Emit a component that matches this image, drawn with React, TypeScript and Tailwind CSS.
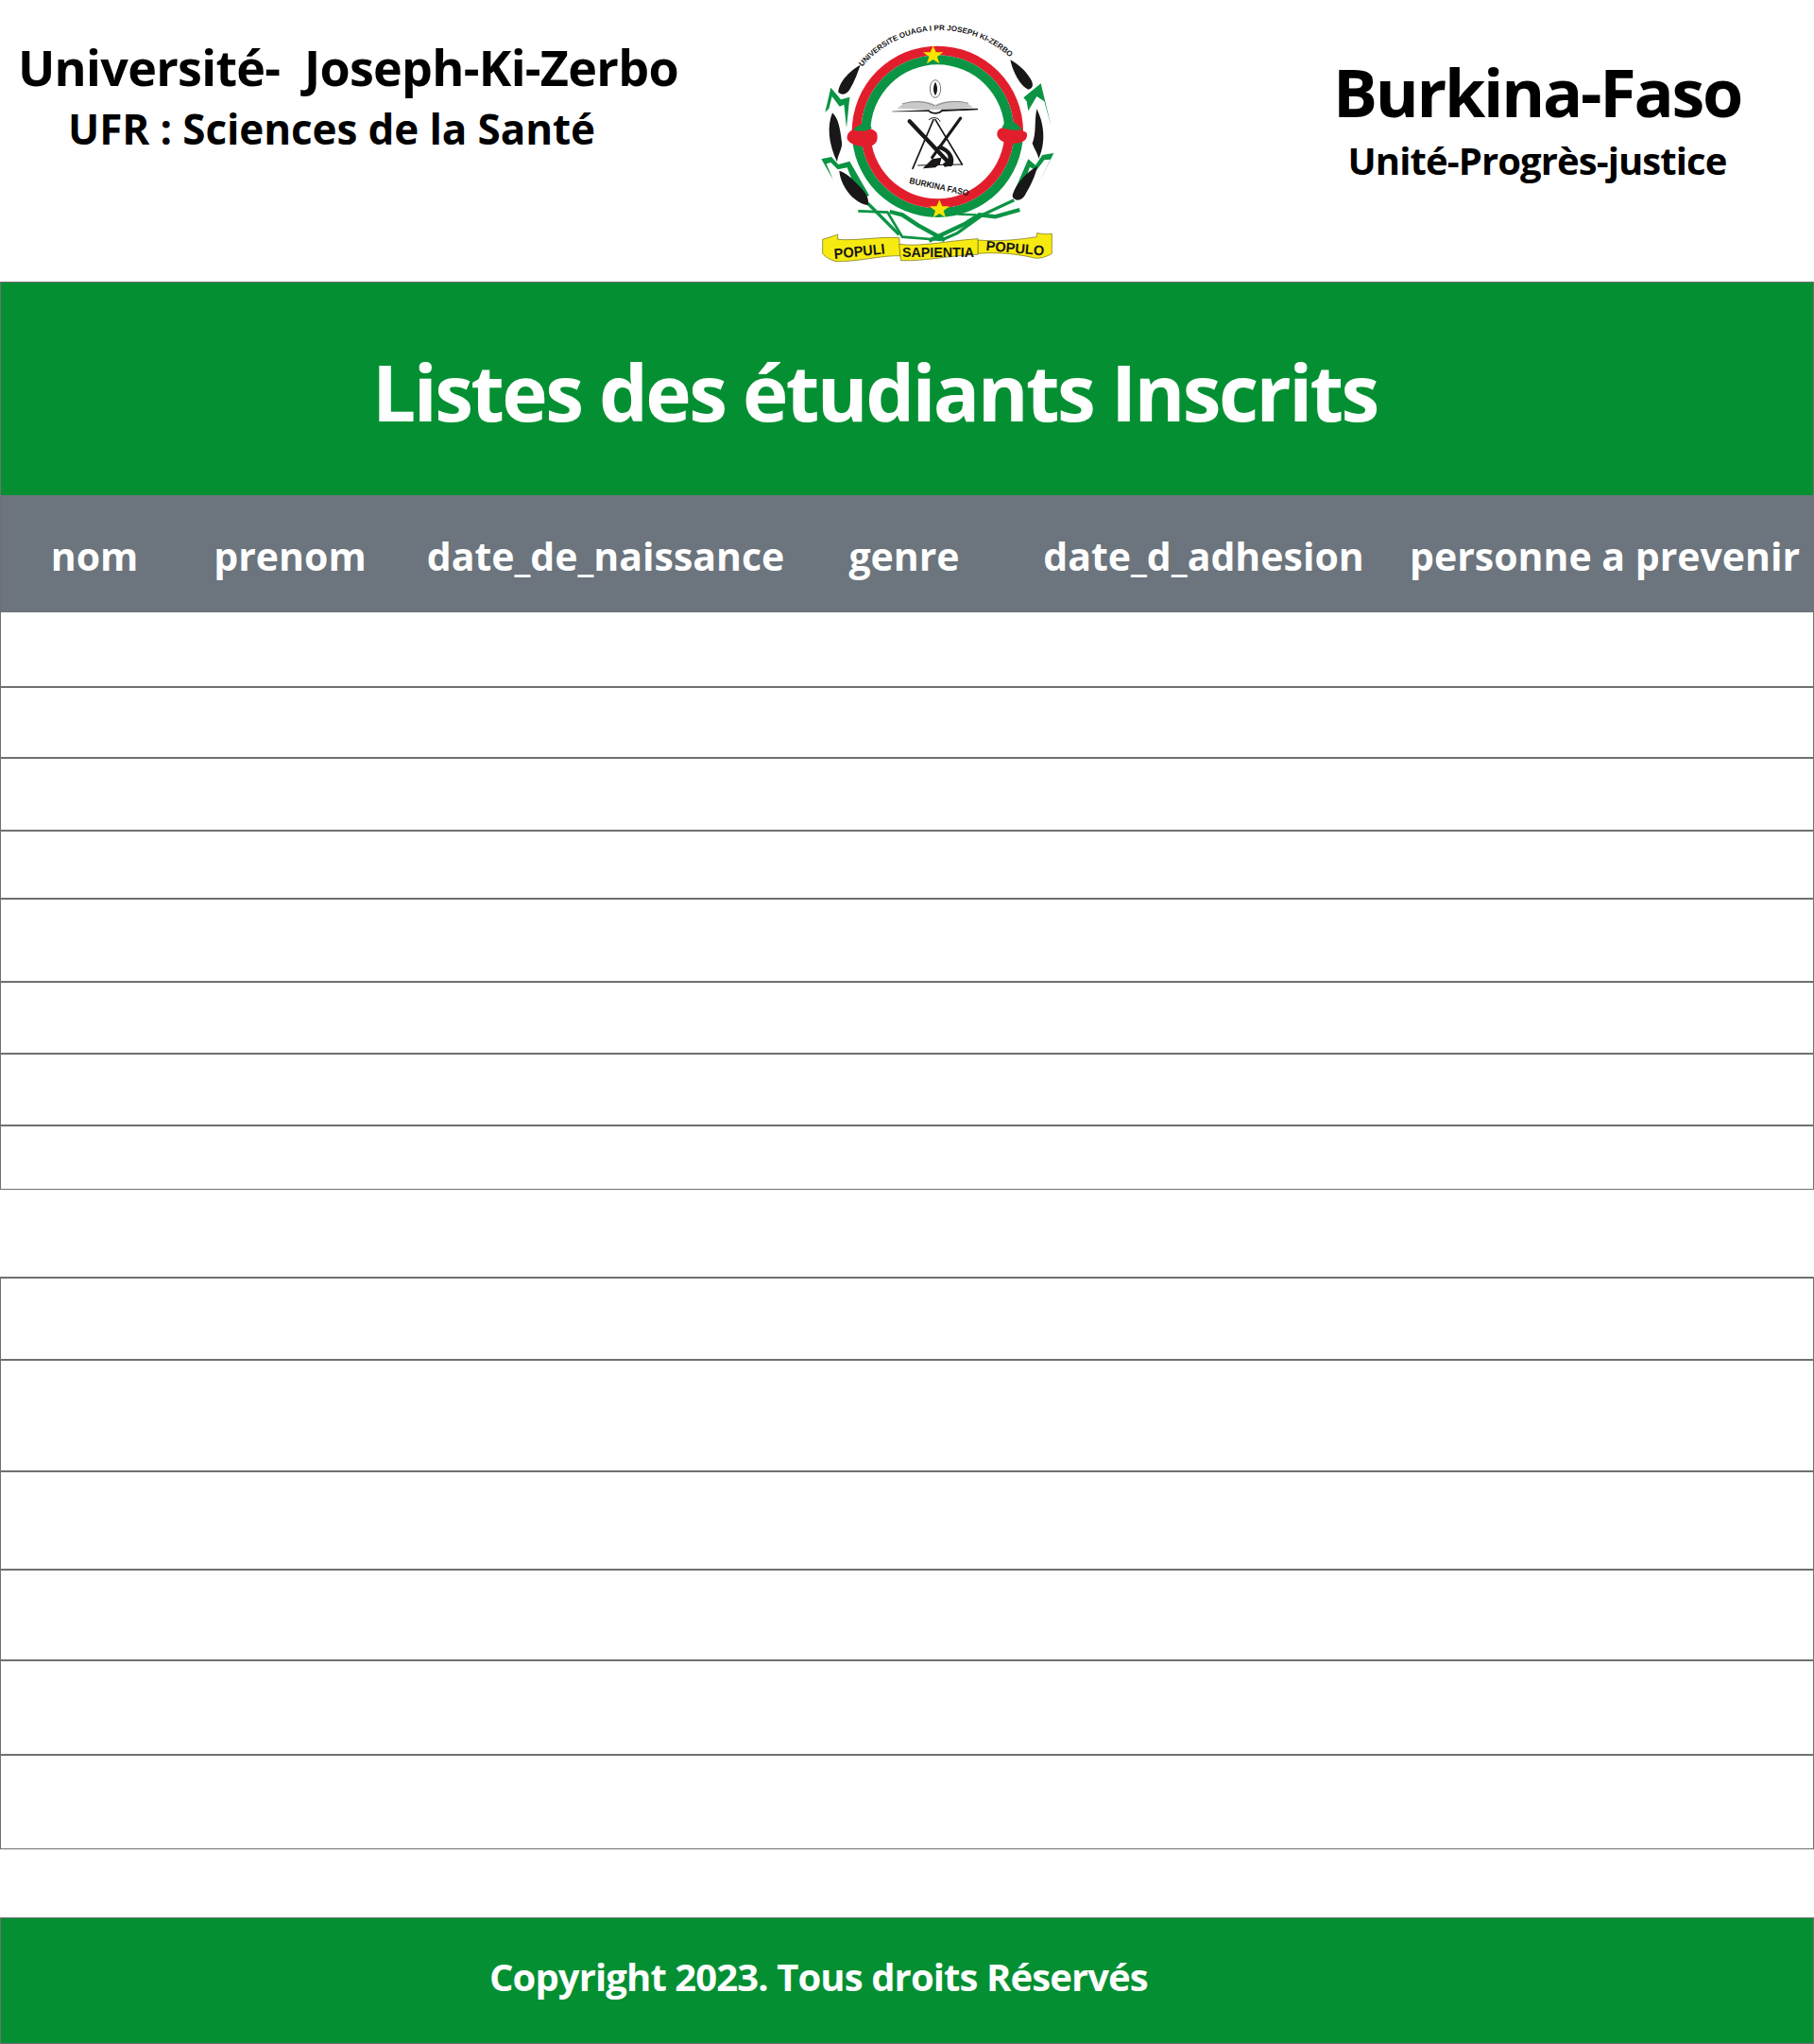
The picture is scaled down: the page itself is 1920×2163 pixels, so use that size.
const firstRows = [80, 75, 77, 72, 88, 76, 76];
const secondRows = [87, 118, 104, 96, 100];

const columns = [
  { label: "nom", className: "w-[198px]" },
  { label: "prenom", className: "w-[216px]" },
  { label: "date_de_naissance", className: "w-[452px]" },
  { label: "genre", className: "w-[180px]" },
  { label: "date_d_adhesion", className: "w-[454px]" },
  { label: "personne a prevenir", className: "w-[413px] -ml-[9px]" },
];

function Logo() {
  return (
    <svg viewBox="0 0 900 810" className="w-[300px] h-[270px] shrink-0">
      <defs>
        <path id="arcTop" d="M 218 152 A 325 325 0 0 1 700 135" fill="none" />
      </defs>
      {/* laurel, green outlines */}
      <g fill="#0a9444">
        <path d="M100 296 L118 218 L150 256 L178 248 L168 346 L160 272 L146 278 L122 246 L112 285 Z" />
        <path d="M88 445 L120 438 L142 462 L178 452 L240 560 L210 575 L170 472 L140 478 L118 456 L104 460 L125 510 Z" />
        <path d="M730 250 L785 205 L818 342 L796 262 L772 246 L745 292 L740 262 Z" />
        <path d="M826 426 L790 432 L768 464 L745 445 L695 560 L720 555 L750 470 L770 482 L796 448 L815 446 L780 520 Z" />
      </g>
      <g fill="none" stroke="#0a9444" strokeLinejoin="miter">
        <path d="M205 610 L298 614 L345 692 L470 702" strokeWidth="8" />
        <path d="M235 585 L335 685" strokeWidth="10" />
        <path d="M305 612 L345 622 L395 655 L480 702" strokeWidth="13" />
        <path d="M718 606 L640 628 L590 622 L545 650 L430 704" strokeWidth="13" />
        <path d="M700 575 L600 622 L520 680 L470 702" strokeWidth="10" />
        <path d="M520 620 L580 622" strokeWidth="7" />
      </g>
      {/* feathers */}
      <g fill="#1a1718">
        <path d="M212 146 C175 165 142 205 142 232 C150 245 168 240 178 224 C192 200 202 175 212 146 Z" />
        <path d="M123 298 C106 340 110 395 138 454 C142 425 158 410 152 385 C148 350 142 315 123 298 Z" />
        <path d="M145 482 C148 525 185 582 236 592 C242 570 228 550 208 530 C188 510 168 488 145 482 Z" />
        <path d="M688 130 C695 165 720 215 745 224 C762 222 762 205 752 190 C737 165 712 142 688 130 Z" />
        <path d="M772 286 C763 330 772 360 758 395 C765 415 775 425 778 444 C794 410 804 350 772 286 Z" />
        <path d="M774 468 C735 488 698 535 695 565 C705 582 727 577 737 555 C752 530 767 500 774 468 Z" />
      </g>
      {/* ring */}
      <path d="M185 358 A272 272 0 0 1 729 358 L700 358 A243 243 0 0 0 214 358 Z" fill="#e21e2d" />
      <path d="M214 358 A243 243 0 0 1 700 358 L670 358 A213 213 0 0 0 244 358 Z" fill="#0a9444" />
      <path d="M185 358 A272 272 0 0 0 729 358 L700 358 A243 243 0 0 1 214 358 Z" fill="#0a9444" />
      <path d="M214 358 A243 243 0 0 0 700 358 L670 358 A213 213 0 0 1 244 358 Z" fill="#e21e2d" />
      {/* knots */}
      <path d="M188 352 C225 345 250 345 264 362 C270 385 262 400 240 405 C210 408 180 400 170 382 C168 368 175 358 188 352 Z" fill="#e21e2d" />
      <path d="M190 352 C205 335 230 325 248 345 C245 352 215 362 190 352 Z" fill="#0a9444" />
      <path d="M665 345 C700 352 730 352 740 362 C745 378 735 392 705 395 C675 396 650 388 646 368 C646 355 652 348 665 345 Z" fill="#e21e2d" />
      <path d="M662 345 C670 318 700 315 725 352 C700 355 680 352 662 345 Z" fill="#0a9444" />
      {/* stars */}
      <polygon points="443,85 452,106 475,106 456,120 463,142 443,129 423,142 430,120 411,106 434,106" fill="#f5e500" />
      <polygon points="463,574 472,595 495,595 476,609 483,631 463,618 443,631 450,609 431,595 454,595" fill="#f5e500" />
      {/* flame */}
      <ellipse cx="450" cy="222" rx="17" ry="28" fill="#ffffff" stroke="#333333" strokeWidth="2" />
      <path d="M450 200 C458 215 458 230 450 243 C442 230 442 215 450 200 Z" fill="#1a1718" />
      {/* open book */}
      <path d="M330 285 C350 258 410 252 450 272 C490 252 550 258 570 283 L470 288 L430 288 Z" fill="#c9c9c9" />
      <path d="M345 270 C380 258 420 262 448 276 M555 268 C520 258 480 262 452 276" fill="none" stroke="#8a8a8a" strokeWidth="3" />
      <path d="M313 293 L430 289 C438 300 462 300 470 288 L585 284 L585 289 L472 294 C462 305 438 305 428 294 L313 295 Z" fill="#1a1718" />
      {/* compass and tools */}
      <g stroke="#1a1718" fill="none" strokeLinecap="round">
        <path d="M368 325 L498 462" strokeWidth="13" />
        <path d="M530 315 L440 440" strokeWidth="9" />
        <path d="M444 320 L378 475" strokeWidth="5" />
        <path d="M450 320 L535 462" strokeWidth="5" />
        <path d="M395 465 L535 462" strokeWidth="3" />
        <path d="M430 320 C440 310 460 312 465 325" strokeWidth="3" />
      </g>
      <path d="M410 475 L440 445 L470 440 L465 460 L450 472 Z" fill="#1a1718" />
      <path d="M450 410 C470 415 495 425 490 445 C485 460 465 455 480 470 L505 465 C515 440 500 415 465 400 Z" fill="#1a1718" />
      {/* ribbon */}
      <g fill="#f7ea10" stroke="#6b6a10" strokeWidth="2">
        <path d="M92 700 C110 695 125 690 140 684 L140 700 C200 705 280 690 335 695 L340 752 C280 750 200 772 135 770 C115 765 100 755 92 745 Z" />
        <path d="M585 702 C650 708 720 700 772 692 L772 680 C790 682 805 685 820 682 L820 745 C805 755 785 760 770 760 C710 745 640 740 585 745 Z" />
        <path d="M335 715 C400 725 480 705 585 698 L585 748 C500 750 420 770 340 767 Z" />
      </g>
      <g fill="#161616" fontFamily="'Liberation Sans', sans-serif">
        <text x="130" y="762" fontSize="46" transform="rotate(-6 130 762)" textLength="162" lengthAdjust="spacingAndGlyphs">POPULI</text>
        <text x="345" y="756" fontSize="44" textLength="228" lengthAdjust="spacingAndGlyphs">SAPIENTIA</text>
        <text x="610" y="735" fontSize="44" transform="rotate(5 610 735)" textLength="185" lengthAdjust="spacingAndGlyphs">POPULO</text>
        <text fontSize="24">
          <textPath href="#arcTop" textLength="525" lengthAdjust="spacingAndGlyphs">UNIVERSITE OUAGA I PR JOSEPH KI-ZERBO</textPath>
        </text>
        <text x="366" y="522" fontSize="27" transform="rotate(12 366 522)" textLength="192" lengthAdjust="spacingAndGlyphs">BURKINA FASO</text>
      </g>
    </svg>
  );
}

export default function App() {
  return (
    <div className="w-[1920px] min-h-[2163px] bg-white font-['Open_Sans','Noto_Sans',sans-serif] font-bold text-black">
      <header className="h-[298px] flex">
        <div className="w-[840px] pt-[38px]">
          <h1 className="ml-[19px] text-[52px] leading-[66px] tracking-[-0.7px] whitespace-pre">Université-  Joseph-Ki-Zerbo</h1>
          <h2 className="ml-[72px] mt-[2px] text-[44px] leading-[60px] tracking-[-0.1px]">UFR : Sciences de la Santé</h2>
        </div>
        <div className="pt-[20px]">
          <Logo />
        </div>
        <div className="flex-1 pt-[49px] pl-[194px] text-center">
          <p className="text-[70px] leading-[96px] tracking-[-2.25px]">Burkina-Faso</p>
          <p className="-mt-[2px] text-[40px] leading-[54px] tracking-[-0.9px]">Unité-Progrès-justice</p>
        </div>
      </header>

      <div className="h-[226px] pt-[5px] border border-b-0 border-[#707070] bg-[#049032] text-white flex items-center pl-[393px]">
        <h1 className="text-[82px] leading-none tracking-[-2.6px]">Listes des étudiants Inscrits</h1>
      </div>

      <div className="h-[124px] pt-[5px] flex items-center bg-[#6c757d] border-l border-r border-[#707070] text-white">
        {columns.map((col) => (
          <div key={col.label} className={`${col.className} text-center text-[41px] whitespace-nowrap`}>
            {col.label}
          </div>
        ))}
      </div>

      <div className="border-l border-r border-[#707070]">
        {firstRows.map((h, i) => (
          <div key={i} className="border-b-2 border-[#707070]" style={{ height: h }} />
        ))}
        <div className="h-[67px] border-b border-[#707070]" />
      </div>

      <div className="mt-[92px] border-l border-r border-t-2 border-[#707070]">
        {secondRows.map((h, i) => (
          <div key={i} className="border-b-2 border-[#707070]" style={{ height: h }} />
        ))}
        <div className="h-[99px] border-b border-[#707070]" />
      </div>

      <footer className="mt-[72px] h-[134px] pb-[8px] border border-[#707070] bg-[#049032] text-white flex items-center pl-[517px]">
        <p className="text-[40px] tracking-[-0.9px]">Copyright 2023. Tous droits Réservés</p>
      </footer>
    </div>
  );
}
